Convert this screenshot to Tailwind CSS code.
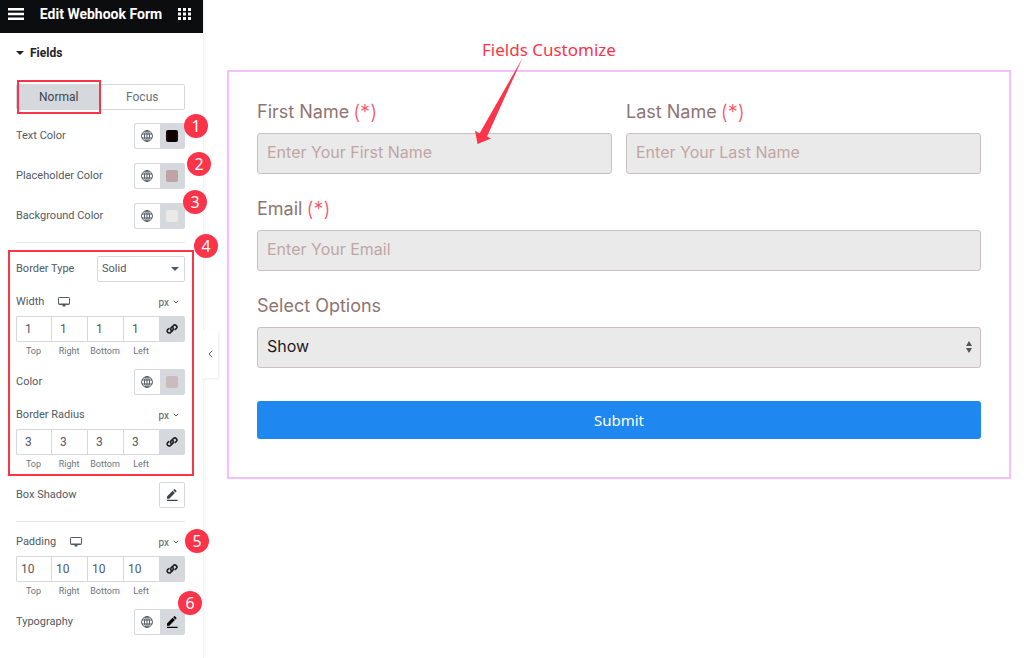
<!DOCTYPE html>
<html lang="en">

<head>
  <meta charset="UTF-8">
  <meta name="viewport" content="width=device-width, initial-scale=1.0">
  <title>Edit Webhook Form</title>
  <script src="https://cdn.jsdelivr.net/npm/@tailwindcss/browser@4"></script>
</head>

<body class="bg-white flex min-h-screen font-[Roboto,sans-serif] text-[11px] text-[#515962]">

  <!-- icons -->
  <svg class="hidden">
    <symbol id="globe" viewBox="0 0 12 12">
      <g fill="none" stroke="currentColor" stroke-width="1">
        <circle cx="6" cy="6" r="5.4" />
        <ellipse cx="6" cy="6" rx="2.5" ry="5.4" />
        <path d="M1 4h10M1 8h10M6 .6v10.8" />
      </g>
    </symbol>
    <symbol id="link" viewBox="0 0 12 12">
      <g fill="none" stroke="currentColor" stroke-width="1.6" stroke-linecap="round">
        <path d="M5.2 7.4a2 2 0 0 1 .1-2.8L7.4 2.6a2 2 0 0 1 2.9 2.8L9.2 6.5" />
        <path d="M6.8 4.6a2 2 0 0 1-.1 2.8L4.6 9.4a2 2 0 0 1-2.9-2.8L2.8 5.5" />
      </g>
    </symbol>
    <symbol id="pencil" viewBox="0 0 12 12">
      <path fill="currentColor" d="M1 9.8V7.4L6.6 1.8l2.3 2.3L3.3 9.8zM7.2 1.2l.9-.9q.4-.4.8 0l1.5 1.5q.4.4 0 .8l-.9.9zM1 10.8h10.6V12H1z" />
    </symbol>
    <symbol id="desktop" viewBox="0 0 12 10">
      <path fill="none" stroke="currentColor" d="M1.2.5h9.6q.7 0 .7.7v5.6q0 .7-.7.7H1.2q-.7 0-.7-.7V1.2q0-.7.7-.7z" />
      <path fill="currentColor" d="M1 6.6h10v1H1zM4.5 8h3v1.6h-3z" />
    </symbol>
    <symbol id="chevron" viewBox="0 0 6 4">
      <path fill="none" stroke="currentColor" d="M.8.8 3 3 5.2.8" />
    </symbol>
  </svg>

  <aside class="relative z-10 w-51 shrink-0 border-r border-[#f3f3f4] shadow-[1px_0_2px_#0000000a]">
    <header class="flex h-[33px] items-center bg-[#0c0d0e] px-2 pb-1.5 text-white">
      <button type="button" aria-label="Menu">
        <svg class="h-3 w-4" viewBox="0 0 16 12" fill="currentColor">
          <path d="M0 0h16v2.6H0zM0 4.7h16v2.6H0zM0 9.4h16V12H0z" />
        </svg>
      </button>
      <h1 class="flex-1 text-center text-sm font-bold">Edit Webhook Form</h1>
      <button type="button" aria-label="Widgets" class="mr-1">
        <svg class="h-3 w-[13px]" viewBox="0 0 13 12" fill="currentColor">
          <path d="M0 0h3v3H0zM5 0h3v3H5zM10 0h3v3h-3zM0 4.5h3v3H0zM5 4.5h3v3H5zM10 4.5h3v3h-3zM0 9h3v3H0zM5 9h3v3H5zM10 9h3v3h-3z" />
        </svg>
      </button>
    </header>

    <div class="pr-[18px] pl-4">
      <button type="button" class="flex h-10 w-full items-center gap-1.5 text-xs font-bold text-[#1f2124]">
        <svg class="h-1 w-2" viewBox="0 0 8 4" fill="currentColor">
          <path d="M0 0h8L4 4z" />
        </svg>
        Fields
      </button>

      <div class="flex flex-col gap-[13px] pt-[11px]">
        <div class="relative flex h-[26px] rounded-xs border border-[#d5d8dc] text-xs">
          <button type="button" class="flex-1 bg-[#d5d8dc] text-[#3f444b]">Normal</button>
          <button type="button" class="flex-1 text-[#69727d]">Focus</button>
          <div class="pointer-events-none absolute -top-[5px] -bottom-[5px] left-0 w-1/2 border-2 border-[#fb3449]"></div>
        </div>

        <div class="flex flex-col gap-3.5">
          <div class="relative flex h-[26px] items-center justify-between">
            <span>Text Color</span>
            <div class="flex h-full w-[51px] overflow-hidden rounded-xs border border-[#d5d8dc]">
              <button type="button" aria-label="Global text color" class="flex flex-1 items-center justify-center"><svg class="size-3"><use href="#globe" /></svg></button>
              <button type="button" aria-label="Text color" class="flex flex-1 items-center justify-center bg-[#d5d8dc]"><span class="size-3 rounded-xs bg-[#0e0000]"></span></button>
            </div>
            <span class="absolute -top-[9px] -right-[23px] flex size-6 items-center justify-center rounded-full bg-[#fb3449] font-['Noto_Sans',sans-serif] text-base text-white">1</span>
          </div>
          <div class="relative flex h-[26px] items-center justify-between">
            <span>Placeholder Color</span>
            <div class="flex h-full w-[51px] overflow-hidden rounded-xs border border-[#d5d8dc]">
              <button type="button" aria-label="Global placeholder color" class="flex flex-1 items-center justify-center"><svg class="size-3"><use href="#globe" /></svg></button>
              <button type="button" aria-label="Placeholder color" class="flex flex-1 items-center justify-center bg-[#d5d8dc]"><span class="size-3 rounded-xs bg-[#bfa3a3]"></span></button>
            </div>
            <span class="absolute -top-[11px] -right-[26px] flex size-6 items-center justify-center rounded-full bg-[#fb3449] font-['Noto_Sans',sans-serif] text-base text-white">2</span>
          </div>
          <div class="relative flex h-[26px] items-center justify-between">
            <span>Background Color</span>
            <div class="flex h-full w-[51px] overflow-hidden rounded-xs border border-[#d5d8dc]">
              <button type="button" aria-label="Global background color" class="flex flex-1 items-center justify-center"><svg class="size-3"><use href="#globe" /></svg></button>
              <button type="button" aria-label="Background color" class="flex flex-1 items-center justify-center bg-[#d5d8dc]"><span class="size-3 rounded-xs bg-[#eaeaea]"></span></button>
            </div>
            <span class="absolute -top-[13px] -right-[22px] flex size-6 items-center justify-center rounded-full bg-[#fb3449] font-['Noto_Sans',sans-serif] text-base text-white">3</span>
          </div>
        </div>

        <hr class="border-[#e6e8ea]">

        <div class="relative flex flex-col gap-[13px]">
          <div class="flex h-[26px] items-center justify-between">
            <label for="border-type">Border Type</label>
            <div class="relative h-full w-22">
              <select id="border-type" class="h-full w-full appearance-none rounded-xs border border-[#d5d8dc] pl-1">
                <option>Solid</option>
                <option>Dashed</option>
                <option>None</option>
              </select>
              <svg class="pointer-events-none absolute top-[11px] right-1.5 h-1 w-2" viewBox="0 0 8 4" fill="currentColor">
                <path d="M0 0h8L4 4z" />
              </svg>
            </div>
          </div>

          <fieldset>
            <div class="mb-[7px] flex h-3.5 items-center">
              <span>Width</span>
              <svg class="ml-3.5 h-2.5 w-3"><use href="#desktop" /></svg>
              <button type="button" class="mr-1.5 ml-auto flex items-center gap-1 text-[10px]">px <svg class="h-1 w-1.5"><use href="#chevron" /></svg></button>
            </div>
            <div class="grid grid-cols-[35px_36px_36px_36px_1fr] text-center text-[9px] leading-[10px] text-[#69727d]">
              <input id="width-top" value="1" class="h-[26px] w-full rounded-l-xs border border-r-0 border-[#d5d8dc] pl-2 text-xs text-[#515962]">
              <input id="width-right" value="1" class="h-[26px] w-full border border-r-0 border-[#d5d8dc] pl-2 text-xs text-[#515962]">
              <input id="width-bottom" value="1" class="h-[26px] w-full border border-r-0 border-[#d5d8dc] pl-2 text-xs text-[#515962]">
              <input id="width-left" value="1" class="h-[26px] w-full border border-r-0 border-[#d5d8dc] pl-2 text-xs text-[#515962]">
              <button type="button" aria-label="Link values" class="flex h-[26px] items-center justify-center rounded-r-xs bg-[#d5d8dc] text-[#1f2124]"><svg class="size-3"><use href="#link" /></svg></button>
              <label for="width-top" class="mt-1">Top</label>
              <label for="width-right" class="mt-1">Right</label>
              <label for="width-bottom" class="mt-1">Bottom</label>
              <label for="width-left" class="mt-1">Left</label>
            </div>
          </fieldset>

          <div class="flex h-[26px] items-center justify-between">
            <span>Color</span>
            <div class="flex h-full w-[51px] overflow-hidden rounded-xs border border-[#d5d8dc]">
              <button type="button" aria-label="Global border color" class="flex flex-1 items-center justify-center"><svg class="size-3"><use href="#globe" /></svg></button>
              <button type="button" aria-label="Border color" class="flex flex-1 items-center justify-center bg-[#d5d8dc]"><span class="size-3 rounded-xs bg-[#c9bcbc]"></span></button>
            </div>
          </div>

          <fieldset>
            <div class="mb-[7px] flex h-3.5 items-center">
              <span>Border Radius</span>
              <button type="button" class="mr-1.5 ml-auto flex items-center gap-1 text-[10px]">px <svg class="h-1 w-1.5"><use href="#chevron" /></svg></button>
            </div>
            <div class="grid grid-cols-[35px_36px_36px_36px_1fr] text-center text-[9px] leading-[10px] text-[#69727d]">
              <input id="radius-top" value="3" class="h-[26px] w-full rounded-l-xs border border-r-0 border-[#d5d8dc] pl-2 text-xs text-[#515962]">
              <input id="radius-right" value="3" class="h-[26px] w-full border border-r-0 border-[#d5d8dc] pl-2 text-xs text-[#515962]">
              <input id="radius-bottom" value="3" class="h-[26px] w-full border border-r-0 border-[#d5d8dc] pl-2 text-xs text-[#515962]">
              <input id="radius-left" value="3" class="h-[26px] w-full border border-r-0 border-[#d5d8dc] pl-2 text-xs text-[#515962]">
              <button type="button" aria-label="Link values" class="flex h-[26px] items-center justify-center rounded-r-xs bg-[#d5d8dc] text-[#1f2124]"><svg class="size-3"><use href="#link" /></svg></button>
              <label for="radius-top" class="mt-1">Top</label>
              <label for="radius-right" class="mt-1">Right</label>
              <label for="radius-bottom" class="mt-1">Bottom</label>
              <label for="radius-left" class="mt-1">Left</label>
            </div>
          </fieldset>

          <div class="pointer-events-none absolute -top-1.5 -right-[9px] -bottom-[7px] -left-2 border-2 border-[#fb3449]"></div>
          <span class="absolute -top-[22px] -right-[33px] flex size-6 items-center justify-center rounded-full bg-[#fb3449] font-['Noto_Sans',sans-serif] text-base text-white">4</span>
        </div>

        <div class="flex h-[26px] items-center justify-between">
          <span>Box Shadow</span>
          <button type="button" aria-label="Edit box shadow" class="flex size-[26px] items-center justify-center rounded-xs border border-[#d5d8dc] text-[#3f444b]"><svg class="size-3"><use href="#pencil" /></svg></button>
        </div>

        <hr class="border-[#e6e8ea]">

        <fieldset class="relative">
          <div class="mb-[7px] flex h-3.5 items-center">
            <span>Padding</span>
            <svg class="ml-3.5 h-2.5 w-3"><use href="#desktop" /></svg>
            <button type="button" class="mr-1.5 ml-auto flex items-center gap-1 text-[10px]">px <svg class="h-1 w-1.5"><use href="#chevron" /></svg></button>
          </div>
          <div class="grid grid-cols-[35px_36px_36px_36px_1fr] text-center text-[9px] leading-[10px] text-[#69727d]">
            <input id="padding-top" value="10" class="h-[26px] w-full rounded-l-xs border border-r-0 border-[#d5d8dc] pl-1 text-xs text-[#515962]">
            <input id="padding-right" value="10" class="h-[26px] w-full border border-r-0 border-[#d5d8dc] pl-1 text-xs text-[#515962]">
            <input id="padding-bottom" value="10" class="h-[26px] w-full border border-r-0 border-[#d5d8dc] pl-1 text-xs text-[#515962]">
            <input id="padding-left" value="10" class="h-[26px] w-full border border-r-0 border-[#d5d8dc] pl-1 text-xs text-[#515962]">
            <button type="button" aria-label="Link values" class="flex h-[26px] items-center justify-center rounded-r-xs bg-[#d5d8dc] text-[#1f2124]"><svg class="size-3"><use href="#link" /></svg></button>
            <label for="padding-top" class="mt-1">Top</label>
            <label for="padding-right" class="mt-1">Right</label>
            <label for="padding-bottom" class="mt-1">Bottom</label>
            <label for="padding-left" class="mt-1">Left</label>
          </div>
          <span class="absolute -top-1.5 -right-6 flex size-6 items-center justify-center rounded-full bg-[#fb3449] font-['Noto_Sans',sans-serif] text-base text-white">5</span>
        </fieldset>

        <div class="relative flex h-[26px] items-center justify-between">
          <span>Typography</span>
          <div class="flex h-full w-[51px] overflow-hidden rounded-xs border border-[#d5d8dc]">
            <button type="button" aria-label="Global typography" class="flex flex-1 items-center justify-center"><svg class="size-3"><use href="#globe" /></svg></button>
            <button type="button" aria-label="Edit typography" class="flex flex-1 items-center justify-center bg-[#d5d8dc] text-black"><svg class="size-3"><use href="#pencil" /></svg></button>
          </div>
          <span class="absolute -top-[18px] -right-[17px] flex size-6 items-center justify-center rounded-full bg-[#fb3449] font-['Noto_Sans',sans-serif] text-base text-white">6</span>
        </div>
      </div>
    </div>

    <button type="button" aria-label="Hide panel" class="absolute top-[330px] left-full flex h-12 w-[15px] items-center justify-center rounded-r-xs bg-white shadow-[1px_1px_3px_#00000014]">
      <svg class="h-2 w-[5px]" viewBox="0 0 5 8" fill="none" stroke="currentColor">
        <path d="M4.2.8 1 4l3.2 3.2" />
      </svg>
    </button>
  </aside>

  <main class="flex-1 pt-[70px] pr-[13px] pl-[23px] font-[Inter,sans-serif]">
    <form class="relative border-2 border-[#f3bffc] px-7 pt-[30px] pb-[38px] text-base text-[#8f7472]">
      <div class="grid grid-cols-2 gap-x-3.5 gap-y-[25px]">
        <div>
          <label for="first-name" class="mb-[11px] flex h-5 items-center gap-1 text-lg">First Name <span class="text-xl font-light text-[#fb5068]">(*)</span></label>
          <input type="text" id="first-name" placeholder="Enter Your First Name" class="block h-[41px] w-full rounded-[3px] border border-[#cdbfbf] bg-[#eaeaea] px-[9px] pb-[3px] text-black placeholder:text-[#c0a5a5]">
        </div>
        <div>
          <label for="last-name" class="mb-[11px] flex h-5 items-center gap-1 text-lg">Last Name <span class="text-xl font-light text-[#fb5068]">(*)</span></label>
          <input type="text" id="last-name" placeholder="Enter Your Last Name" class="block h-[41px] w-full rounded-[3px] border border-[#cdbfbf] bg-[#eaeaea] px-[9px] pb-[3px] text-black placeholder:text-[#c0a5a5]">
        </div>
        <div class="col-span-2">
          <label for="email" class="mb-[11px] flex h-5 items-center gap-1 text-lg">Email <span class="text-xl font-light text-[#fb5068]">(*)</span></label>
          <input type="email" id="email" placeholder="Enter Your Email" class="block h-[41px] w-full rounded-[3px] border border-[#cdbfbf] bg-[#eaeaea] px-[9px] pb-[3px] text-black placeholder:text-[#c0a5a5]">
        </div>
        <div class="col-span-2">
          <label for="options" class="mb-[11px] flex h-5 items-center text-lg">Select Options</label>
          <div class="relative">
            <select id="options" class="block h-[41px] w-full appearance-none rounded-[3px] border border-[#cdbfbf] bg-[#eaeaea] px-[9px] pb-[3px] text-[#1c1c1c]">
              <option>Show</option>
              <option>Hide</option>
            </select>
            <svg class="pointer-events-none absolute top-3.5 right-[9px] h-3 w-1.5" viewBox="0 0 6 12" fill="#555">
              <path d="M0 5 3 0l3 5zM0 7h6l-3 5z" />
            </svg>
          </div>
        </div>
      </div>
      <button type="submit" class="mt-[33px] h-[38px] w-full rounded-[3px] bg-[#1e87f0] font-['Noto_Sans',sans-serif] text-[15px] text-white">Submit</button>

      <!-- callout -->
      <div class="pointer-events-none absolute -top-8 left-[246px] text-[#fb3449]">
        <p class="pl-[7px] font-['Noto_Sans',sans-serif] text-[17px] leading-5">Fields Customize</p>
        <svg class="-mt-0.5 h-[86px] w-12" viewBox="0 0 48 86" fill="currentColor">
          <path d="M47.5 0 12 78.5l4 2L2.5 86 0 72.5l4.5 3z" />
        </svg>
      </div>
    </form>
  </main>

</body>

</html>
